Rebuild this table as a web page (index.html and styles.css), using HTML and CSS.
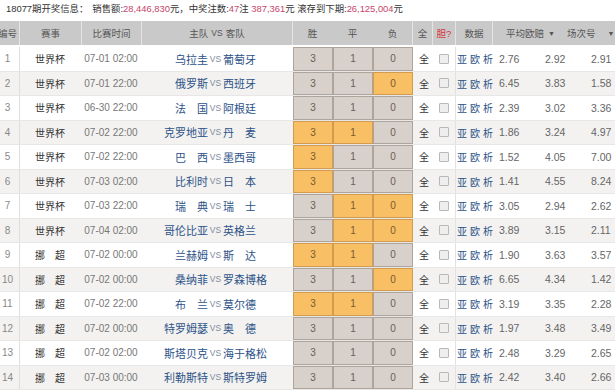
FILE: index.html
```html
<!DOCTYPE html>
<html lang="zh-CN">
<head>
<meta charset="utf-8">
<title>18077期</title>
<link rel="stylesheet" href="styles.css">
</head>
<body>
<div class="title">18077期开奖信息：<span class="gap"></span>销售额:<em>28,446,830</em>元，中奖注数:<em>47</em>注 <em>387,361</em>元 滚存到下期:<em>26,125,004</em>元</div>
<div class="table">
  <div class="head">
    <div class="h">编号</div>
    <div class="h">赛事</div>
    <div class="h">比赛时间</div>
    <div class="h">主队 <span class="hvs">VS</span> 客队</div>
    <div class="h h-res"><span>胜</span><span>平</span><span>负</span></div>
    <div class="h">全</div>
    <div class="h h-dan">胆?</div>
    <div class="h">数据</div>
    <div class="h h-odds">平均欧赔 <span class="tri">▼</span></div>
    <div class="h h-num">场次号 <span class="tri">▼</span></div>
  </div>

  <div class="row">
    <div class="no">1</div><div class="lg">世界杯</div><div class="tm">07-01 02:00</div>
    <div class="teams"><span class="home">乌拉圭</span><span class="vs">VS</span><span class="away">葡萄牙</span></div>
    <div class="b">3</div><div class="b">1</div><div class="b">0</div>
    <div class="all">全</div><div class="ck"><span class="box"></span></div><div class="data">亚欧析</div>
    <div class="od">2.76</div><div class="od">2.92</div><div class="od">2.91</div>
  </div>
  <div class="row">
    <div class="no">2</div><div class="lg">世界杯</div><div class="tm">07-01 22:00</div>
    <div class="teams"><span class="home">俄罗斯</span><span class="vs">VS</span><span class="away">西班牙</span></div>
    <div class="b">3</div><div class="b">1</div><div class="b on">0</div>
    <div class="all">全</div><div class="ck"><span class="box"></span></div><div class="data">亚欧析</div>
    <div class="od">6.45</div><div class="od">3.83</div><div class="od">1.58</div>
  </div>
  <div class="row">
    <div class="no">3</div><div class="lg">世界杯</div><div class="tm">06-30 22:00</div>
    <div class="teams"><span class="home">法　国</span><span class="vs">VS</span><span class="away">阿根廷</span></div>
    <div class="b">3</div><div class="b">1</div><div class="b">0</div>
    <div class="all">全</div><div class="ck"><span class="box"></span></div><div class="data">亚欧析</div>
    <div class="od">2.39</div><div class="od">3.02</div><div class="od">3.36</div>
  </div>
  <div class="row">
    <div class="no">4</div><div class="lg">世界杯</div><div class="tm">07-02 22:00</div>
    <div class="teams"><span class="home">克罗地亚</span><span class="vs">VS</span><span class="away">丹　麦</span></div>
    <div class="b on">3</div><div class="b on">1</div><div class="b">0</div>
    <div class="all">全</div><div class="ck"><span class="box"></span></div><div class="data">亚欧析</div>
    <div class="od">1.86</div><div class="od">3.24</div><div class="od">4.97</div>
  </div>
  <div class="row">
    <div class="no">5</div><div class="lg">世界杯</div><div class="tm">07-02 22:00</div>
    <div class="teams"><span class="home">巴　西</span><span class="vs">VS</span><span class="away">墨西哥</span></div>
    <div class="b on">3</div><div class="b">1</div><div class="b">0</div>
    <div class="all">全</div><div class="ck"><span class="box"></span></div><div class="data">亚欧析</div>
    <div class="od">1.52</div><div class="od">4.05</div><div class="od">7.00</div>
  </div>
  <div class="row">
    <div class="no">6</div><div class="lg">世界杯</div><div class="tm">07-03 02:00</div>
    <div class="teams"><span class="home">比利时</span><span class="vs">VS</span><span class="away">日　本</span></div>
    <div class="b on">3</div><div class="b">1</div><div class="b">0</div>
    <div class="all">全</div><div class="ck"><span class="box"></span></div><div class="data">亚欧析</div>
    <div class="od">1.41</div><div class="od">4.55</div><div class="od">8.24</div>
  </div>
  <div class="row">
    <div class="no">7</div><div class="lg">世界杯</div><div class="tm">07-03 22:00</div>
    <div class="teams"><span class="home">瑞　典</span><span class="vs">VS</span><span class="away">瑞　士</span></div>
    <div class="b">3</div><div class="b on">1</div><div class="b on">0</div>
    <div class="all">全</div><div class="ck"><span class="box"></span></div><div class="data">亚欧析</div>
    <div class="od">3.05</div><div class="od">2.94</div><div class="od">2.62</div>
  </div>
  <div class="row">
    <div class="no">8</div><div class="lg">世界杯</div><div class="tm">07-04 02:00</div>
    <div class="teams"><span class="home">哥伦比亚</span><span class="vs">VS</span><span class="away">英格兰</span></div>
    <div class="b">3</div><div class="b on">1</div><div class="b on">0</div>
    <div class="all">全</div><div class="ck"><span class="box"></span></div><div class="data">亚欧析</div>
    <div class="od">3.89</div><div class="od">3.15</div><div class="od">2.11</div>
  </div>
  <div class="row">
    <div class="no">9</div><div class="lg">挪　超</div><div class="tm">07-02 00:00</div>
    <div class="teams"><span class="home">兰赫姆</span><span class="vs">VS</span><span class="away">斯　达</span></div>
    <div class="b on">3</div><div class="b on">1</div><div class="b">0</div>
    <div class="all">全</div><div class="ck"><span class="box"></span></div><div class="data">亚欧析</div>
    <div class="od">1.90</div><div class="od">3.63</div><div class="od">3.57</div>
  </div>
  <div class="row">
    <div class="no">10</div><div class="lg">挪　超</div><div class="tm">07-02 00:00</div>
    <div class="teams"><span class="home">桑纳菲</span><span class="vs">VS</span><span class="away">罗森博格</span></div>
    <div class="b">3</div><div class="b">1</div><div class="b on">0</div>
    <div class="all">全</div><div class="ck"><span class="box"></span></div><div class="data">亚欧析</div>
    <div class="od">6.65</div><div class="od">4.34</div><div class="od">1.42</div>
  </div>
  <div class="row">
    <div class="no">11</div><div class="lg">挪　超</div><div class="tm">07-02 22:00</div>
    <div class="teams"><span class="home">布　兰</span><span class="vs">VS</span><span class="away">莫尔德</span></div>
    <div class="b on">3</div><div class="b on">1</div><div class="b">0</div>
    <div class="all">全</div><div class="ck"><span class="box"></span></div><div class="data">亚欧析</div>
    <div class="od">3.19</div><div class="od">3.35</div><div class="od">2.28</div>
  </div>
  <div class="row">
    <div class="no">12</div><div class="lg">挪　超</div><div class="tm">07-02 00:00</div>
    <div class="teams"><span class="home">特罗姆瑟</span><span class="vs">VS</span><span class="away">奥　德</span></div>
    <div class="b">3</div><div class="b">1</div><div class="b">0</div>
    <div class="all">全</div><div class="ck"><span class="box"></span></div><div class="data">亚欧析</div>
    <div class="od">1.97</div><div class="od">3.48</div><div class="od">3.49</div>
  </div>
  <div class="row">
    <div class="no">13</div><div class="lg">挪　超</div><div class="tm">07-02 02:00</div>
    <div class="teams"><span class="home">斯塔贝克</span><span class="vs">VS</span><span class="away">海于格松</span></div>
    <div class="b">3</div><div class="b">1</div><div class="b">0</div>
    <div class="all">全</div><div class="ck"><span class="box"></span></div><div class="data">亚欧析</div>
    <div class="od">2.48</div><div class="od">3.29</div><div class="od">2.65</div>
  </div>
  <div class="row">
    <div class="no">14</div><div class="lg">挪　超</div><div class="tm">07-03 00:00</div>
    <div class="teams"><span class="home">利勒斯特</span><span class="vs">VS</span><span class="away">斯特罗姆</span></div>
    <div class="b">3</div><div class="b">1</div><div class="b">0</div>
    <div class="all">全</div><div class="ck"><span class="box"></span></div><div class="data">亚欧析</div>
    <div class="od">2.42</div><div class="od">3.40</div><div class="od">2.66</div>
  </div>
</div>
</body>
</html>
```
FILE: styles.css
```css
html, body {
  margin: 0;
  padding: 0;
  overflow: hidden;
  background: #fff;
  font-family: "Liberation Sans", "Noto Sans CJK SC", sans-serif;
  color: #333;
}
.title {
  height: 21px;
  line-height: 18px;
  padding-left: 6px;
  font-size: 9.4px;
  color: #333;
  white-space: nowrap;
}
.title em {
  font-style: normal;
  color: #c8456c;
}
.title .gap {
  display: inline-block;
  width: 4px;
}
.table {
  margin-left: -6px;
  width: 637px;
}
.head {
  display: grid;
  grid-template-columns: 26px 62px 60px 151px 120px 20px 23px 37px 67px 71px;
  height: 24px;
  background: #c9c9c9;
  margin-bottom: 2px;
}
.h {
  display: flex;
  align-items: center;
  justify-content: center;
  font-size: 9.5px;
  color: #555;
  border-right: 1px solid #e4e4e4;
  white-space: nowrap;
  overflow: hidden;
}
.h:first-child {
  justify-content: flex-end;
  padding-right: 2px;
}
.h .hvs {
  font-size: 8.5px;
  margin: 0 3px;
}
.h-res {
  display: grid;
  grid-template-columns: repeat(3, 40px);
  justify-items: center;
}
.h-dan {
  color: #d8333a;
}
.h-odds {
  border-right: none;
  padding-left: 8px;
}
.h-num {
  border-right: none;
  justify-content: flex-start;
  padding-left: 7px;
}
.tri {
  font-size: 7px;
  margin-left: 4px;
  color: #555;
}
.h-num .tri {
  margin-left: 12px;
}
.row {
  display: grid;
  grid-template-columns: 26px 62px 60px 151px 40px 40px 40px 20px 23px 37px 46px 46px 46px;
  height: 24.5px;
  box-sizing: border-box;
  border-bottom: 1px solid #e7e7e7;
  align-items: center;
  font-size: 10px;
}
.row:nth-child(odd) {
  background: #f3f2f0;
}
.row > div {
  height: 100%;
  display: flex;
  align-items: center;
  white-space: nowrap;
}
.no {
  justify-content: center;
  padding-left: 2px;
  color: #888;
  border-right: 1px solid #dedede;
  box-sizing: border-box;
}
.lg {
  justify-content: center;
  color: #333;
  padding-right: 2px;
}
.tm {
  justify-content: center;
  color: #777;
  padding-right: 2px;
}
.teams {
  display: grid !important;
  grid-template-columns: 66px 15px 1fr;
  align-items: center;
  font-size: 11px;
  color: #2d5288;
}
.home {
  text-align: right;
}
.vs {
  text-align: center;
  font-size: 8.5px;
  color: #7d8aa0;
}
.away {
  text-align: left;
}
.b {
  justify-content: center;
  box-sizing: border-box;
  background: #d8d0cb;
  border: 1px solid #aea49c;
  color: #6a5e56;
  font-size: 10px;
}
.b.on {
  background: #f8bf64;
  border-color: #d29b4d;
  color: #7a5a30;
}
.all {
  justify-content: center;
  color: #333;
  padding-left: 2px;
}
.ck {
  justify-content: center;
  border-right: 1px solid #e2e2e2;
  box-sizing: border-box;
}
.box {
  width: 8px;
  height: 8px;
  border: 1px solid #b9b9b9;
  background: #eeeeee;
  border-radius: 1px;
}
.data {
  color: #2d5288;
  letter-spacing: 3px;
  padding-left: 1px;
}
.od {
  color: #666;
  padding-left: 6px;
  font-size: 10.5px;
}
```
